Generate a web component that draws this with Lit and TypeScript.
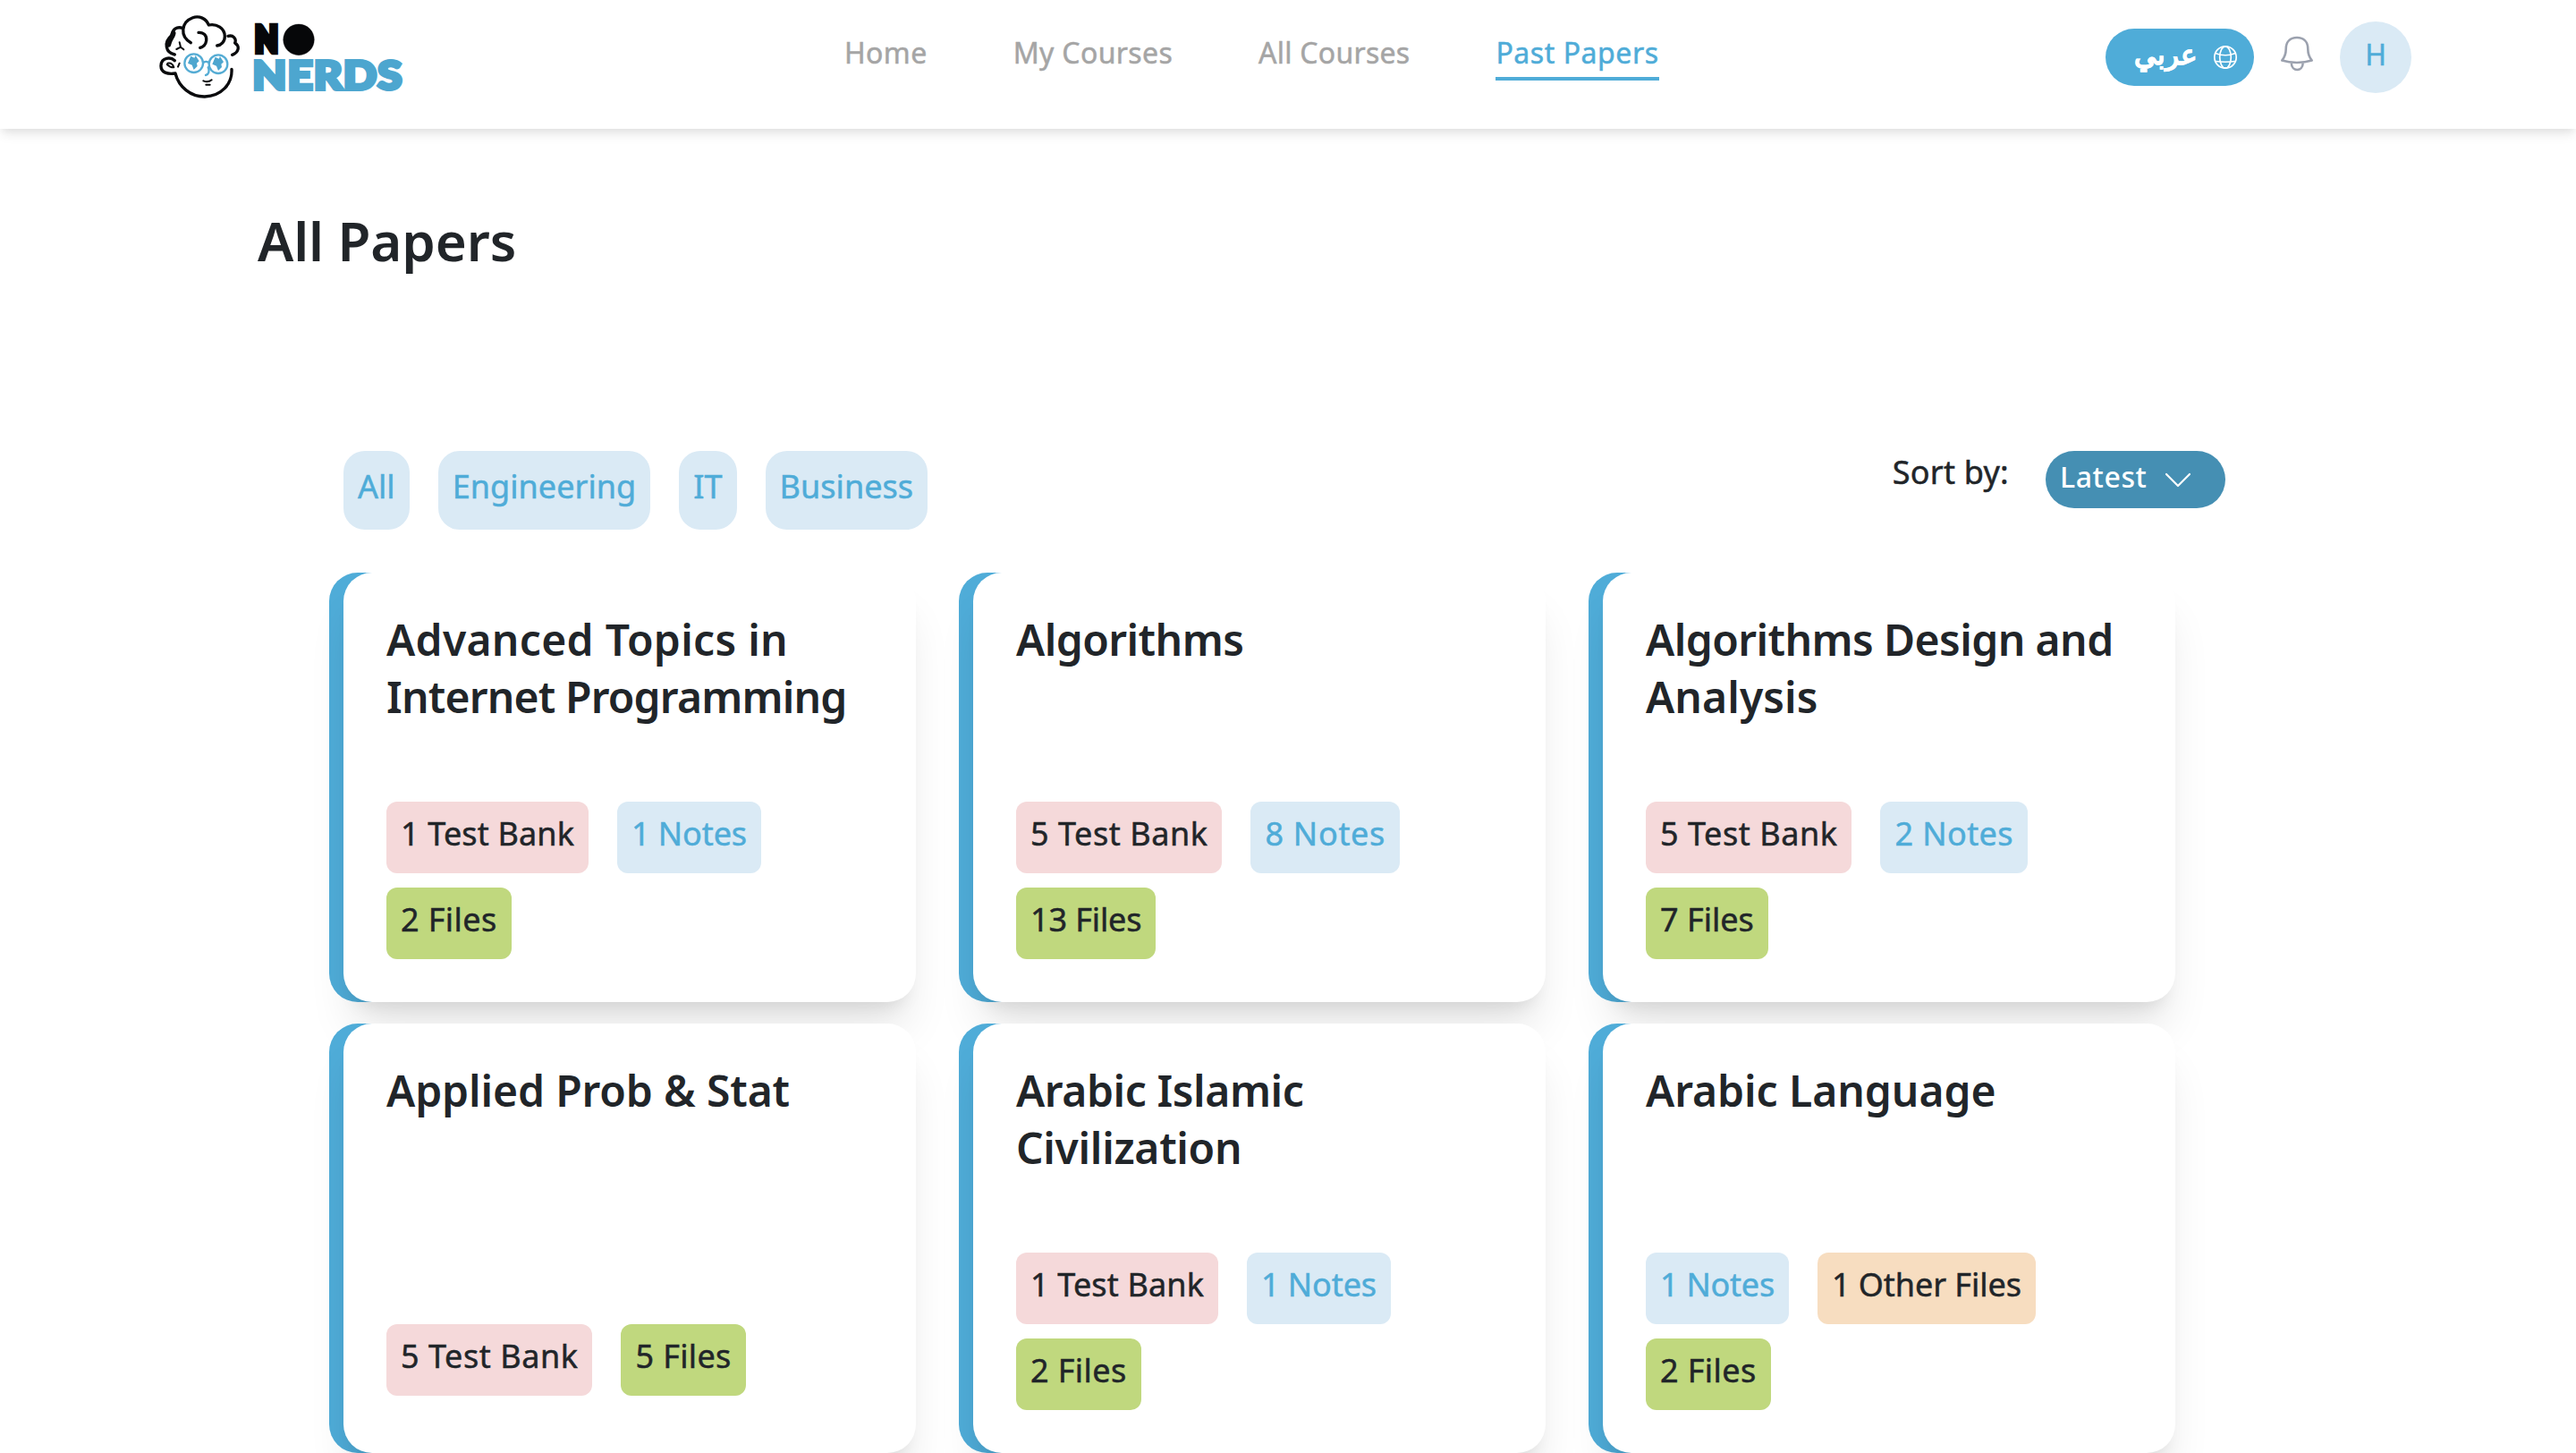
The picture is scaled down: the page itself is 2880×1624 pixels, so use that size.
import { LitElement, html, css } from "lit";
import { customElement, property } from "lit/decorators.js";
import { classMap } from "lit/directives/class-map.js";

type Kind = "bank" | "notes" | "files" | "other";
interface Tag { label: string; kind: Kind; track: number }
interface Line { text: string; track: number }
interface Paper { title: Line[]; tags: Tag[] }

const tag = (label: string, kind: Kind, track = 0): Tag => ({ label, kind, track });
const line = (text: string, track: number): Line => ({ text, track });

const PAPERS: Paper[] = [
  { title: [line("Advanced Topics in", 0.3), line("Internet Programming", -0.82)], tags: [tag("1 Test Bank", "bank", 0.15), tag("1 Notes", "notes", -0.1), tag("2 Files", "files", 0.4)] },
  { title: [line("Algorithms", -0.55)], tags: [tag("5 Test Bank", "bank", 0.55), tag("8 Notes", "notes", 0.7), tag("13 Files", "files", -0.12)] },
  { title: [line("Algorithms Design and", -0.57), line("Analysis", 0.1)], tags: [tag("5 Test Bank", "bank", 0.55), tag("2 Notes", "notes", 0.4), tag("7 Files", "files")] },
  { title: [line("Applied Prob & Stat", -0.12)], tags: [tag("5 Test Bank", "bank", 0.55), tag("5 Files", "files", 0.35)] },
  { title: [line("Arabic Islamic", -0.42), line("Civilization", -0.3)], tags: [tag("1 Test Bank", "bank", 0.15), tag("1 Notes", "notes", -0.1), tag("2 Files", "files", 0.4)] },
  { title: [line("Arabic Language", -0.05)], tags: [tag("1 Notes", "notes", -0.25), tag("1 Other Files", "other", -0.05), tag("2 Files", "files", 0.4)] },
];

@customElement("brand-logo")
class BrandLogo extends LitElement {
  static styles = css`
    :host { display: block; width: 320px; height: 144px; }
    svg { display: block; }
    .ink { fill: none; stroke: #0a0b0d; stroke-width: 10; stroke-linecap: round; stroke-linejoin: round; }
    .thin { stroke-width: 6; }
    .fat { stroke-width: 17; }
    .lens { fill: none; stroke: #55acd4; stroke-width: 7; stroke-linecap: round; }
    .spark { fill: #4da6cf; }
    .word { font-family: Lato, sans-serif; font-weight: 900; }
    .dark { fill: #060709; stroke: #060709; }
    .blue { fill: #4da6cf; stroke: #4da6cf; }
  `;
  render() {
    return html`<svg width="320" height="144" viewBox="0 0 960 432">
      <path class="ink" d="M160 143C122 122 128 74 165 60C188 51 212 62 220 84C246 78 274 95 274 122C274 140 262 152 248 153" />
      <path class="ink" d="M133 94C112 88 98 98 97 118C84 128 76 142 79 158C82 174 92 180 106 183" />
      <path class="ink fat" d="M101 112C98 126 88 132 85 150" />
      <path class="ink" d="M186 109C204 108 214 120 212 136C210 150 202 157 191 160" />
      <path class="ink" d="M285 121C302 116 314 130 308 144C326 156 320 176 299 184" />
      <path class="ink" d="M106 203C92 190 62 192 60 219C58 244 84 250 108 246C120 292 160 325 207 324C262 322 300 282 297 232" />
      <path class="ink thin" d="M82 212C92 210 100 216 103 226M80 216C88 224 94 226 102 226M122 212L117 224M122 142L126 158L112 165M126 158L136 166" />
      <path class="ink thin" d="M202 271Q218 278 230 268M211 284H224" />
      <circle class="lens" cx="170" cy="212" r="31" />
      <circle class="lens" cx="252" cy="215" r="31" />
      <path class="lens" d="M202 210Q211 203 220 210M218 226C224 238 220 250 210 252" />
      <path class="spark" d="M160 188L172 194L176 186L188 205L180 212L182 222L170 234L164 218L150 212Z" />
      <path class="spark" d="M242 191L254 197L258 189L270 208L262 215L264 225L252 237L246 221L232 215Z" />
      <text class="word dark" x="376" y="174" font-size="118" stroke-width="20" stroke-linejoin="miter" textLength="76" lengthAdjust="spacingAndGlyphs">N</text>
      <text class="word dark" x="476" y="174" font-size="114" stroke-width="6" textLength="92" lengthAdjust="spacingAndGlyphs">O</text>
      <circle class="dark" cx="522" cy="133" r="52" />
      <text class="word blue" x="367" y="299" font-size="132" stroke-width="12" letter-spacing="3" textLength="504" lengthAdjust="spacingAndGlyphs">NERDS</text>
    </svg>`;
  }
}

@customElement("site-header")
class SiteHeader extends LitElement {
  static styles = css`
    :host { display: block; position: relative; z-index: 1; }
    .bar { display: flex; height: 144px; background: #fff; box-shadow: 0 8px 12px -2px rgba(0,0,0,.09), 0 4px 8px -2px rgba(0,0,0,.05); padding-left: 160px; box-sizing: border-box; font: 400 32px/48px "Noto Sans", sans-serif; -webkit-text-stroke: .5px; }
    .nav { display: flex; gap: 96px; margin-left: 464px; padding-top: 35px; height: 55px; }
    .link { color: #a5a5a5; border-bottom: 4px solid transparent; padding-bottom: 3px; white-space: nowrap; height: 48px; }
    .home { letter-spacing: .4px; }
    .mine { letter-spacing: .35px; }
    .every { letter-spacing: .25px; }
    .past { letter-spacing: .55px; color: #4facd8; border-color: #4facd8; }
    .tools { display: flex; align-items: flex-start; margin-left: auto; padding-right: 184px; }
    .lang { display: flex; box-sizing: border-box; width: 166px; height: 64px; margin-top: 32px; padding-left: 33px; border-radius: 32px; background: #4facd8; color: #fff; font-weight: 600; }
    .word { width: 70px; line-height: 56px; font-size: 31px; }
    .globe { margin: 18px 0 0 17px; }
    .bell { margin: 38px 0 0 28px; }
    .avatar { width: 80px; height: 80px; margin: 24px 0 0 28px; border-radius: 50%; background: #daeaf5; color: #4facd8; text-align: center; line-height: 73px; }
  `;
  render() {
    return html`<header class="bar">
      <brand-logo></brand-logo>
      <nav class="nav">
        <a class="link home">Home</a><a class="link mine">My Courses</a><a class="link every">All Courses</a><a class="link past">Past Papers</a>
      </nav>
      <div class="tools">
        <div class="lang"><span class="word" dir="rtl">عربي</span>
          <svg class="globe" width="28" height="28" viewBox="0 0 28 28" fill="none" stroke="#fff" stroke-width="1.7">
            <circle cx="14" cy="14" r="12.2" /><ellipse cx="14" cy="14" rx="6.3" ry="12.2" />
            <path d="M2.8 9.5Q14 14 25.2 9.5M2.8 18.5Q14 20 25.2 18.5" />
          </svg>
        </div>
        <svg class="bell" width="40" height="44" viewBox="0 0 40 44" fill="none" stroke="#9ba1ae" stroke-width="2.6" stroke-linejoin="round">
          <path d="M3.3 29.6C7 25 7.7 21.5 7.7 17C7.7 8.5 12.5 4 20 4C27.5 4 32.3 8.5 32.3 17C32.3 21.5 33 25 36.7 29.6C27 32.8 13 32.8 3.3 29.6Z" />
          <path d="M13.8 32.5C14 42.5 26.5 42.5 26.7 32.5" />
        </svg>
        <div class="avatar">H</div>
      </div>
    </header>`;
  }
}

@customElement("paper-card")
class PaperCard extends LitElement {
  @property({ attribute: false }) paper!: Paper;
  static styles = css`
    :host { display: block; }
    .card { display: flex; flex-direction: column; justify-content: space-between; box-sizing: border-box; width: 640px; height: 480px; padding: 43px 48px 48px; border-radius: 32px; background: #fff; box-shadow: 0 40px 50px -10px rgba(0,0,0,.1), 0 16px 20px -12px rgba(0,0,0,.1), -16px 0 0 #4facd8; }
    .title { margin: 0; font: 600 48px/64px "Noto Sans", sans-serif; color: #212529; }
    .tags { display: flex; flex-wrap: wrap; gap: 16px 32px; font: 400 36px/72px "Noto Sans", sans-serif; color: #212529; -webkit-text-stroke: .5px; }
    .single { padding-bottom: 16px; }
    .tag { box-sizing: border-box; height: 80px; padding: 0 16px; border-radius: 12px; white-space: nowrap; }
    .bank { background: #f5d9da; }
    .notes { background: #daeaf5; color: #4facd8; }
    .files { background: #c0d87e; }
    .other { background: #f7ddc0; }
  `;
  render() {
    const { title, tags } = this.paper;
    return html`<article class="card">
      <h2 class="title">${title.map((l) => html`<span style="letter-spacing:${l.track}px">${l.text}</span> `)}</h2>
      <div class=${classMap({ tags: true, single: tags.length < 3 })}>
        ${tags.map((t) => html`<span class="tag ${t.kind}" style="letter-spacing:${t.track}px">${t.label}</span>`)}
      </div>
    </article>`;
  }
}

@customElement("app-root")
class AppRoot extends LitElement {
  static styles = css`
    :host { display: block; height: 1624px; overflow: hidden; background: #fff; font-family: "Noto Sans", sans-serif; color: #212529; }
    .heading { margin: 0; padding: 85px 0 0 288px; font: 600 60px/80px "Noto Sans", sans-serif; letter-spacing: -.1px; }
    .controls { display: flex; justify-content: space-between; align-items: flex-start; padding: 195px 392px 0 384px; -webkit-text-stroke: .5px; }
    .filters { display: flex; gap: 32px; }
    .filter { box-sizing: border-box; height: 88px; padding: 0 16px; border-radius: 24px; background: #daeaf5; color: #4facd8; font-size: 36px; line-height: 80px; letter-spacing: .04px; }
    .sort { display: flex; align-items: flex-start; }
    .by { font-size: 36px; line-height: 48px; margin-right: 41px; letter-spacing: .25px; }
    .latest { display: flex; box-sizing: border-box; width: 201px; height: 64px; padding-left: 16px; border-radius: 32px; background: #458fb3; color: #fff; font: 500 32px/57px "Noto Sans", sans-serif; letter-spacing: .6px; -webkit-text-stroke: 0; }
    .chevron { margin: 22px 0 0 19px; }
    .grid { display: grid; grid-template-columns: repeat(3, 640px); gap: 24px 64px; padding: 48px 0 0 384px; }
  `;
  render() {
    return html`<site-header></site-header>
      <main>
        <h1 class="heading">All Papers</h1>
        <div class="controls">
          <div class="filters">${["All", "Engineering", "IT", "Business"].map((f) => html`<span class="filter">${f}</span>`)}</div>
          <div class="sort"><span class="by">Sort by:</span>
            <div class="latest">Latest
              <svg class="chevron" width="32" height="24" viewBox="0 0 32 24" fill="none" stroke="#fff" stroke-width="2.2" stroke-linecap="round" stroke-linejoin="round"><path d="M3 4L16 17L29 4" /></svg>
            </div>
          </div>
        </div>
        <section class="grid">${PAPERS.map((p) => html`<paper-card .paper=${p}></paper-card>`)}</section>
      </main>`;
  }
}
